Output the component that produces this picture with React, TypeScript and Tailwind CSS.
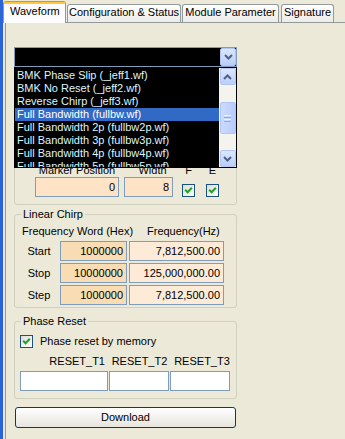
import { FC, ReactNode } from "react";

const waveforms = [
  "BMK Phase Slip (_jeff1.wf)",
  "BMK No Reset (_jeff2.wf)",
  "Reverse Chirp (_jeff3.wf)",
  "Full Bandwidth (fullbw.wf)",
  "Full Bandwidth 2p (fullbw2p.wf)",
  "Full Bandwidth 3p (fullbw3p.wf)",
  "Full Bandwidth 4p (fullbw4p.wf)",
  "Full Bandwidth 5p (fullbw5p.wf)",
];
const selectedWave = 3;

const chirpRows = [
  { label: "Start", hex: "1000000", hz: "7,812,500.00" },
  { label: "Stop", hex: "10000000", hz: "125,000,000.00" },
  { label: "Step", hex: "1000000", hz: "7,812,500.00" },
];

const Chevron: FC<{ up?: boolean }> = ({ up }) => (
  <svg width="9" height="6" viewBox="0 0 9 6" className={up ? "rotate-180" : ""}>
    <path d="M1 1 L4.5 4.5 L8 1" fill="none" stroke="#4D6185" strokeWidth="2" />
  </svg>
);

const XpButton: FC<{ children?: ReactNode; className?: string }> = ({ children, className = "" }) => (
  <div
    className={`w-[16px] rounded-[2px] border border-[#B1C6F3] bg-linear-to-b from-[#DCE7FE] to-[#BACEFB] flex items-center justify-center ${className}`}
  >
    {children}
  </div>
);

const Tick: FC = () => (
  <span className="w-[13px] h-[13px] border border-[#1C5180] bg-linear-to-br from-[#DCDCD7] to-white flex items-center justify-center">
    <svg width="9" height="9" viewBox="0 0 9 9">
      <path d="M1.2 3.8 L3.6 6.3 L7.8 1.8" fill="none" stroke="#21A121" strokeWidth="2" />
    </svg>
  </span>
);

const Field: FC<{ value?: string; className: string }> = ({ value, className }) => (
  <div className={`h-[20px] border border-[#7F9DB9] text-right pr-[3px] leading-[18px] whitespace-nowrap ${className}`}>
    {value}
  </div>
);

const Tab: FC<{ className: string; children: ReactNode }> = ({ className, children }) => (
  <div
    className={`h-[18px] mb-[1px] border border-b-0 border-[#919B9C] rounded-t-[3px] bg-linear-to-b from-white to-[#ECEBE6] text-center pt-[1px] whitespace-nowrap ${className}`}
  >
    {children}
  </div>
);

export default function App() {
  return (
    <div className="w-[345px] h-[439px] overflow-hidden bg-[#ECE9D8] border-l-[3px] border-[#2B63D9] font-['Liberation_Sans',Arial,sans-serif] text-[11px] leading-[13px] text-black whitespace-nowrap">
      {/* tabs */}
      <div className="flex items-end h-[23px] -mb-px">
        <div className="relative z-10 w-[63px] h-[22px] bg-[#FCFCFE] border-x border-t border-[#919B9C] border-t-[#E68B2C] rounded-t-[3px] flex flex-col">
          <div className="h-[2px] bg-[#FFC83C]" />
          <span className="pl-[6px] pt-[1px]">Waveform</span>
        </div>
        <Tab className="w-[114px] ml-[1px]">Configuration &amp; Status</Tab>
        <Tab className="w-[97px] ml-[1px]">Module Parameter</Tab>
        <Tab className="w-[53px] ml-[2px]">Signature</Tab>
      </div>

      {/* page */}
      <div className="ml-[2px] h-[417px] border-t border-l border-[#919B9C] pl-[8px] pt-[24px]">
        <div className="w-[223px] flex flex-col">
          <div className="relative">
            <div className="h-[20px] border border-[#7F9DB9] bg-black flex justify-end">
              <XpButton className="h-full">
                <Chevron />
              </XpButton>
            </div>

            {/* open dropdown list */}
            <div className="absolute z-20 left-0 top-full w-[223px] h-[101px] border border-black bg-black flex">
              <div className="flex-1 pt-[1px] overflow-hidden">
                {waveforms.map((w, i) => (
                  <div
                    key={w}
                    className={`h-[13px] pl-[2px] ${
                      i === selectedWave ? "bg-[#316AC5] text-white" : "text-[#DDF5FF]"
                    }`}
                  >
                    {w}
                  </div>
                ))}
              </div>
              <div className="w-[17px] bg-[#F4F3EE] flex flex-col items-center">
                <XpButton className="h-[17px]">
                  <Chevron up />
                </XpButton>
                <div className="mt-[17px] h-[32px] w-[16px] rounded-[2px] border border-[#B1C6F3] bg-linear-to-r from-[#CCDAFE] to-[#B8CCFB] flex flex-col items-center justify-center gap-[1px]">
                  <div className="w-[7px] h-px bg-[#EEF3FE]" />
                  <div className="w-[7px] h-px bg-[#8CACEF]" />
                  <div className="w-[7px] h-px bg-[#EEF3FE]" />
                  <div className="w-[7px] h-px bg-[#8CACEF]" />
                </div>
                <div className="flex-1" />
                <XpButton className="h-[17px]">
                  <Chevron />
                </XpButton>
              </div>
            </div>
          </div>

          {/* marker group */}
          <fieldset className="mt-[6px] border border-[#D0D0BF] rounded-[3px]">
            <div className="h-[130px] flex flex-col justify-end pb-[7px]">
              <div className="flex h-[13px]">
                <span className="ml-[20px] w-[84px] text-center">Marker Position</span>
                <span className="ml-[5px] w-[49px] text-center pl-[8px]">Width</span>
                <span className="ml-[9px] w-[13px] text-center">F</span>
                <span className="ml-[11px] w-[13px] text-center">E</span>
              </div>
              <div className="flex items-end">
                <Field value="0" className="ml-[20px] w-[84px] bg-[#FFE3C6]" />
                <Field value="8" className="ml-[5px] w-[49px] bg-[#FFE3C6]" />
                <span className="ml-[9px]">
                  <Tick />
                </span>
                <span className="ml-[11px]">
                  <Tick />
                </span>
              </div>
            </div>
          </fieldset>

          {/* linear chirp */}
          <fieldset className="mt-[3px] border border-[#D0D0BF] rounded-[3px] pt-[4px] pb-[2px]">
            <legend className="ml-[6px] px-[2px]">Linear Chirp</legend>
            <div className="flex h-[13px]">
              <span className="w-[112px] pl-[7px]">Frequency Word (Hex)</span>
              <span className="ml-[2px] w-[95px] pl-[18px]">Frequency(Hz)</span>
            </div>
            <div className="mt-[3px] flex flex-col gap-[2px]">
              {chirpRows.map((r) => (
                <div key={r.label} className="flex items-center">
                  <span className="w-[45px] pl-[3px] text-center">{r.label}</span>
                  <Field value={r.hex} className="w-[67px] bg-[#F8DCB4]" />
                  <Field value={r.hz} className="ml-[2px] w-[95px] bg-[#FDEBD8]" />
                </div>
              ))}
            </div>
          </fieldset>

          {/* phase reset */}
          <fieldset className="mt-[7px] border border-[#D0D0BF] rounded-[3px] pt-[7px] pb-[7px]">
            <legend className="ml-[6px] px-[2px]">Phase Reset</legend>
            <div className="flex items-center h-[13px] pl-[5px]">
              <Tick />
              <span className="ml-[7px]">Phase reset by memory</span>
            </div>
            <div className="mt-[7px] flex h-[13px] pl-[5px]">
              <span className="w-[88px] text-right pr-[3px]">RESET_T1</span>
              <span className="ml-[1px] w-[60px] text-center pl-[1px]">RESET_T2</span>
              <span className="ml-[1px] w-[60px] text-center pl-[4px]">RESET_T3</span>
            </div>
            <div className="mt-[3px] flex pl-[5px]">
              <Field className="w-[88px] bg-white" />
              <Field className="ml-[1px] w-[60px] bg-white" />
              <Field className="ml-[1px] w-[60px] bg-white" />
            </div>
          </fieldset>

          <button className="mt-[8px] ml-[1px] w-[221px] h-[21px] rounded-[3px] border border-[#003C74] bg-linear-to-b from-white to-[#E6E4DC] text-center leading-[19px]">
            Download
          </button>
        </div>
      </div>
    </div>
  );
}
